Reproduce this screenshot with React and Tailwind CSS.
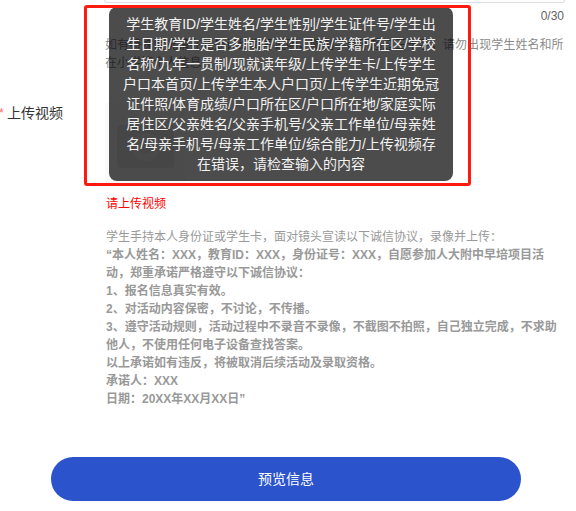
const toastText =
  "学生教育ID/学生姓名/学生性别/学生证件号/学生出生日期/学生是否多胞胎/学生民族/学籍所在区/学校名称/九年一贯制/现就读年级/上传学生卡/上传学生户口本首页/上传学生本人户口页/上传学生近期免冠证件照/体育成绩/户口所在区/户口所在地/家庭实际居住区/父亲姓名/父亲手机号/父亲工作单位/母亲姓名/母亲手机号/母亲工作单位/综合能力/上传视频存在错误，请检查输入的内容";

const promise = [
  "“本人姓名：XXX，教育ID：XXX，身份证号：XXX，自愿参加人大附中早培项目活动，郑重承诺严格遵守以下诚信协议：",
  "1、报名信息真实有效。",
  "2、对活动内容保密，不讨论，不传播。",
  "3、遵守活动规则，活动过程中不录音不录像，不截图不拍照，自己独立完成，不求助他人，不使用任何电子设备查找答案。",
  "以上承诺如有违反，将被取消后续活动及录取资格。",
  "承诺人：XXX",
  "日期：20XX年XX月XX日”",
];

const App = () => {
  return (
    <div className="relative w-[576px] h-[511px] overflow-hidden bg-white font-['Liberation_Sans','Noto_Sans_CJK_SC',sans-serif]">
      <div className="flex flex-col">
        <div className="ml-[104px] mr-[11px] h-[3px] rounded-b-[4px] border border-t-0 border-[#dcdfe6]" />
        <div className="mr-3 mt-[5px] text-right text-[12px] leading-[16px] text-[#606266]">0/30</div>

        <div className="ml-[105px] mr-[12px] mt-[12px] h-[36px] text-[12px] leading-[18px] tracking-[0.07px] text-[#8a8a8a]">
          如有特殊情况请在此处详细填写说明，限制字数不超过三十字，请勿出现学生姓名和所在小学等个人信息
        </div>

        <div className="mt-[31px] flex">
          <div className="flex h-[20px] w-[105px] shrink-0">
            <span className="w-[7px] text-[12px] leading-[20px] text-[#f56c6c] -ml-[1px] mr-[1px]">*</span>
            <span className="text-[14px] leading-[20px] text-[#333333]">上传视频</span>
          </div>
          <div className="h-[80px] w-[80px] bg-[#fafafa] pl-[12px] pt-[22px]">
            <div className="flex h-[43px] w-[57px] items-center justify-center rounded bg-[#ececec]">
              <div className="h-[28px] w-[28px] rounded-full border-[7px] border-[#f4f4f4] bg-[#ececec]" />
            </div>
          </div>
        </div>

        <div className="ml-[106px] mt-[12px] text-[12px] leading-[18px] text-[#ff0000]">请上传视频</div>

        <div className="ml-[106px] mr-[19px] mt-[15px] text-[12px] leading-[18px] text-[#999999]">
          <p>学生手持本人身份证或学生卡，面对镜头宣读以下诚信协议，录像并上传：</p>
          {promise.map((line) => (
            <p key={line} className="font-bold">{line}</p>
          ))}
        </div>

        <button className="ml-[51px] mt-[49px] h-[44px] w-[470px] rounded-[22px] bg-[#2b54cc] text-[14px] text-white">
          预览信息
        </button>
      </div>

      <div className="absolute left-[109px] top-[7px] w-[344px] rounded-[8px] bg-black/70 px-[14px] py-[7px] text-center text-[14px] leading-[20px] text-[#f2f2f2]">
        {toastText}
      </div>
      <div className="absolute left-[84px] top-[5px] h-[181px] w-[387px] rounded-[3px] border-[3px] border-[#ff1a0f]" />
    </div>
  );
};

export default App;
